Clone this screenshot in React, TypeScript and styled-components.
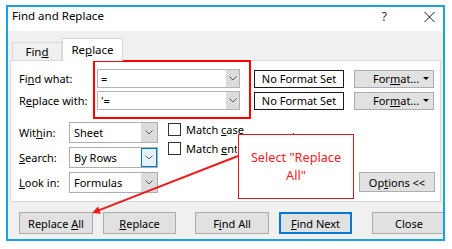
import styled, { createGlobalStyle } from "styled-components";

const Global = createGlobalStyle`
  html, body { margin: 0; padding: 0; background: #fff; }
  body {
    font-family: "Noto Sans", "Liberation Sans", sans-serif;
    font-size: 11px;
    color: #000;
  }
  * { box-sizing: border-box; }
  u { text-underline-offset: 1px; }
`;

const Page = styled.div`
  position: relative;
  width: 452px;
  height: 249px;
  overflow: hidden;
  background: #fff;
  padding: 5px 0 0 6px;
`;

const Window = styled.div`
  width: 439px;
  height: 236px;
  border: 2px solid #1ba1e2;
  background: #f0f0f0;
  display: flex;
  flex-direction: column;
  overflow: hidden;
`;

const TitleBar = styled.div`
  height: 24px;
  flex: none;
  background: #fff;
  display: flex;
  align-items: center;
  padding: 0 0 7px 4px;
  font-size: 11.5px;
`;

const TitleText = styled.span`
  line-height: 16px;
`;

const Help = styled.span`
  margin-left: auto;
  font-size: 12px;
  color: #333;
  line-height: 16px;
  padding-top: 2px;
`;

const CloseGlyph = styled.svg`
  margin: 2px 8px 0 37px;
`;

const Body = styled.div`
  flex: 1;
  padding: 7px 2px 0 2px;
  display: flex;
  flex-direction: column;
`;

const TabStrip = styled.div`
  height: 22px;
  display: flex;
  align-items: flex-end;
  padding-left: 2px;
`;

const Tab = styled.div<{ $active?: boolean }>`
  position: relative;
  z-index: ${(p) => (p.$active ? 1 : 0)};
  width: ${(p) => (p.$active ? 61 : 50)}px;
  height: ${(p) => (p.$active ? 23 : 18)}px;
  margin-bottom: ${(p) => (p.$active ? -1 : 0)}px;
  background: ${(p) => (p.$active ? "#fff" : "#f0f0f0")};
  border: 1px solid #d9d9d9;
  border-bottom: none;
  display: flex;
  align-items: center;
  justify-content: center;
  padding-bottom: ${(p) => (p.$active ? 2 : 0)}px;
  font-size: 11.5px;
`;

const Panel = styled.div`
  height: 142px;
  background: #fff;
  border: 1px solid #d9d9d9;
  padding: 8px 0 0 8px;
`;

const FieldRows = styled.div`
  display: flex;
  flex-direction: column;
  gap: 3px;
`;

const FieldRow = styled.div`
  height: 19px;
  display: flex;
  align-items: center;
`;

const Label = styled.span<{ $w: number }>`
  width: ${(p) => p.$w}px;
  flex: none;
  white-space: nowrap;
`;

const Combo = styled.div`
  width: 143px;
  height: 19px;
  border: 1px solid #b4b4b4;
  background: #fff;
  display: flex;
  align-items: center;
`;

const ComboValue = styled.span`
  flex: 1;
  padding-left: 3px;
`;

const DropButton = styled.div<{ $w: number; $focus?: boolean }>`
  width: ${(p) => p.$w}px;
  align-self: stretch;
  display: flex;
  align-items: center;
  justify-content: center;
  background: ${(p) => (p.$focus ? "#e5f1fb" : "#dcdcdc")};
  border: 1px solid ${(p) => (p.$focus ? "#0078d7" : "#dcdcdc")};
`;

const FormatState = styled.div`
  width: 90px;
  height: 18px;
  margin-left: 14px;
  border: 1px solid #1a1a1a;
  background: #fff;
  display: flex;
  align-items: center;
  justify-content: center;
  white-space: nowrap;
`;

const FormatButton = styled.div`
  width: 80px;
  height: 18px;
  margin-left: 10px;
  background: #e1e1e1;
  border: 1px solid #adadad;
  display: flex;
  align-items: center;
  padding: 0 4px 0 18px;
`;

const Caret = styled.span`
  margin-left: auto;
  width: 0;
  height: 0;
  border-left: 3px solid transparent;
  border-right: 3px solid transparent;
  border-top: 3px solid #000;
`;

const OptionsArea = styled.div`
  margin-top: 12px;
  display: flex;
  align-items: flex-start;
`;

const SelectGrid = styled.div`
  display: grid;
  grid-template-columns: 50px 89px;
  grid-auto-rows: 21px;
  row-gap: 4px;
  align-items: center;
`;

const Select = styled.div`
  width: 89px;
  height: 21px;
  border: 1px solid #adadad;
  background: #fff;
  display: flex;
  align-items: center;
`;

const SelectValue = styled.span`
  flex: 1;
  padding-left: 4px;
  padding-bottom: 1px;
`;

const Checks = styled.div`
  margin: 1px 0 0 10px;
  display: flex;
  flex-direction: column;
  gap: 6px;
`;

const CheckRow = styled.div`
  height: 13px;
  display: flex;
  align-items: center;
  white-space: nowrap;
`;

const CheckBox = styled.span`
  width: 13px;
  height: 13px;
  border: 1px solid #333;
  background: #fff;
  margin-right: 5px;
  flex: none;
`;

/* the callout covers the rest of this label in the screenshot */
const CheckText = styled.span<{ $clip?: number }>`
  max-width: ${(p) => (p.$clip ? `${p.$clip}px` : "none")};
  overflow: hidden;
`;

const OptionsButton = styled.div`
  margin: 0 5px 1px auto;
  align-self: flex-end;
  width: 76px;
  height: 20px;
  background: #e1e1e1;
  border: 1px solid #adadad;
  display: flex;
  align-items: center;
  justify-content: center;
  white-space: nowrap;
`;

const ButtonRow = styled.div`
  margin-top: 10px;
  padding-left: 9px;
  display: flex;
`;

const Button = styled.div<{ $w: number; $ml: number; $primary?: boolean }>`
  flex: none;
  width: ${(p) => p.$w}px;
  height: 22px;
  margin-left: ${(p) => p.$ml}px;
  background: #e1e1e1;
  border: ${(p) => (p.$primary ? "2px solid #0078d7" : "1px solid #adadad")};
  display: flex;
  align-items: center;
  justify-content: center;
  white-space: nowrap;
`;

const RedFrame = styled.div`
  position: absolute;
  left: 93px;
  top: 60px;
  width: 158px;
  height: 59px;
  border: 2px solid #f00;
`;

const Callout = styled.div`
  position: absolute;
  left: 238px;
  top: 134px;
  width: 116px;
  height: 65px;
  background: #fff;
  border: 1px solid #e8141c;
  color: #f5191f;
  font-size: 12.7px;
  line-height: 18px;
  display: flex;
  align-items: center;
  justify-content: center;
  text-align: center;
  padding-bottom: 1px;
  white-space: nowrap;
`;

const ArrowLayer = styled.svg`
  position: absolute;
  left: 0;
  top: 0;
  pointer-events: none;
`;

const Chevron = () => (
  <svg width="8" height="5" viewBox="0 0 8 5">
    <polyline points="0.5,0.5 4,4 7.5,0.5" fill="none" stroke="#5a5a5a" strokeWidth="1" />
  </svg>
);

export default function App() {
  return (
    <>
      <Global />
      <Page>
        <Window>
          <TitleBar>
            <TitleText>Find and Replace</TitleText>
            <Help>?</Help>
            <CloseGlyph width="11" height="10" viewBox="0 0 11 10">
              <line x1="0.5" y1="0" x2="10.5" y2="10" stroke="#111" strokeWidth="1" />
              <line x1="10.5" y1="0" x2="0.5" y2="10" stroke="#111" strokeWidth="1" />
            </CloseGlyph>
          </TitleBar>
          <Body>
            <TabStrip>
              <Tab>
                <span>
                  Fin<u>d</u>
                </span>
              </Tab>
              <Tab $active>
                <span>
                  Re<u>p</u>lace
                </span>
              </Tab>
            </TabStrip>
            <Panel>
              <FieldRows>
                <FieldRow>
                  <Label $w={78}>
                    Fi<u>n</u>d what:
                  </Label>
                  <Combo>
                    <ComboValue>=</ComboValue>
                    <DropButton $w={13}>
                      <Chevron />
                    </DropButton>
                  </Combo>
                  <FormatState>No Format Set</FormatState>
                  <FormatButton>
                    <span>
                      For<u>m</u>at...
                    </span>
                    <Caret />
                  </FormatButton>
                </FieldRow>
                <FieldRow>
                  <Label $w={78}>
                    R<u>e</u>place with:
                  </Label>
                  <Combo>
                    <ComboValue>'=</ComboValue>
                    <DropButton $w={13}>
                      <Chevron />
                    </DropButton>
                  </Combo>
                  <FormatState>No Format Set</FormatState>
                  <FormatButton>
                    <span>
                      For<u>m</u>at...
                    </span>
                    <Caret />
                  </FormatButton>
                </FieldRow>
              </FieldRows>
              <OptionsArea>
                <SelectGrid>
                  <Label $w={50}>
                    Wit<u>h</u>in:
                  </Label>
                  <Select>
                    <SelectValue>Sheet</SelectValue>
                    <DropButton $w={16}>
                      <Chevron />
                    </DropButton>
                  </Select>
                  <Label $w={50}>
                    <u>S</u>earch:
                  </Label>
                  <Select>
                    <SelectValue>By Rows</SelectValue>
                    <DropButton $w={16} $focus>
                      <Chevron />
                    </DropButton>
                  </Select>
                  <Label $w={50}>
                    <u>L</u>ook in:
                  </Label>
                  <Select>
                    <SelectValue>Formulas</SelectValue>
                    <DropButton $w={16}>
                      <Chevron />
                    </DropButton>
                  </Select>
                </SelectGrid>
                <Checks>
                  <CheckRow>
                    <CheckBox />
                    <CheckText>
                      Match <u>c</u>ase
                    </CheckText>
                  </CheckRow>
                  <CheckRow>
                    <CheckBox />
                    <CheckText $clip={51}>
                      Match <u>e</u>ntire cell contents
                    </CheckText>
                  </CheckRow>
                </Checks>
                <OptionsButton>
                  <span>
                    Op<u>t</u>ions &lt;&lt;
                  </span>
                </OptionsButton>
              </OptionsArea>
            </Panel>
            <ButtonRow>
              <Button $w={74} $ml={0}>
                <span>
                  Replace <u>A</u>ll
                </span>
              </Button>
              <Button $w={73} $ml={10}>
                <span>
                  <u>R</u>eplace
                </span>
              </Button>
              <Button $w={74} $ml={19}>
                <span>
                  F<u>i</u>nd All
                </span>
              </Button>
              <Button $w={73} $ml={10} $primary>
                <span>
                  <u>F</u>ind Next
                </span>
              </Button>
              <Button $w={74} $ml={20}>
                Close
              </Button>
            </ButtonRow>
          </Body>
        </Window>
        <RedFrame />
        <ArrowLayer width="452" height="249" viewBox="0 0 452 249">
          <line x1="238" y1="156" x2="98" y2="210.6" stroke="#ee1c1c" strokeWidth="2" />
          <polygon points="92,213 100.9,213.8 98,206.4" fill="#ee1c1c" />
          <line x1="293.5" y1="133" x2="293.5" y2="135" stroke="#ee1c1c" strokeWidth="1" />
        </ArrowLayer>
        <Callout>
          <span>
            Select "Replace
            <br />
            All"
          </span>
        </Callout>
      </Page>
    </>
  );
}
